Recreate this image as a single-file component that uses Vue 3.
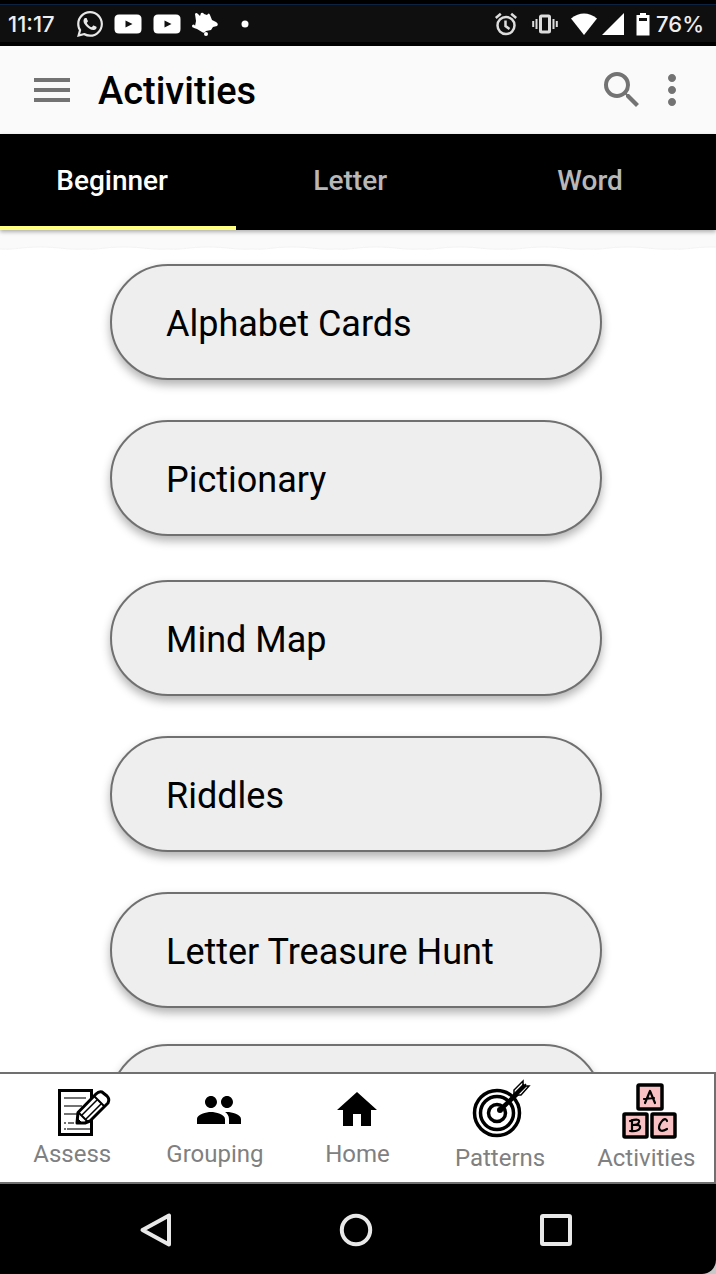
<script setup>
import { ref } from 'vue'

const tabs = ['Beginner', 'Letter', 'Word']
const activeTab = ref('Beginner')
const activities = [
  'Alphabet Cards',
  'Pictionary',
  'Mind Map',
  'Riddles',
  'Letter Treasure Hunt',
]
</script>

<template>
  <div class="phone">
    <div class="status">
      <span class="clock">11:17</span>
      <div class="notices">
        <svg width="26" height="26" viewBox="0 0 24 24" fill="#e8e8e8" aria-hidden="true">
          <path d="M17.47 14.38c-.3-.15-1.76-.87-2.03-.97-.27-.1-.47-.15-.67.15-.2.3-.77.97-.94 1.16-.17.2-.35.22-.64.08-.3-.15-1.26-.46-2.39-1.48-.88-.79-1.48-1.76-1.65-2.06-.17-.3-.02-.46.13-.6.13-.14.3-.35.44-.53.15-.17.2-.3.3-.5.1-.2.05-.37-.03-.52-.07-.15-.67-1.61-.91-2.21-.24-.58-.49-.5-.67-.51h-.57c-.2 0-.52.07-.79.37-.27.3-1.04 1.02-1.04 2.48 0 1.46 1.06 2.88 1.21 3.07.15.2 2.1 3.2 5.08 4.49.71.3 1.26.49 1.69.62.71.23 1.36.2 1.87.12.57-.09 1.76-.72 2.01-1.41.25-.7.25-1.29.17-1.42-.07-.12-.27-.2-.57-.33zM12.05 21.8a9.9 9.9 0 0 1-5.03-1.38l-.36-.21-3.74.98 1-3.65-.24-.37A9.86 9.86 0 0 1 2.17 11.9c0-5.45 4.43-9.88 9.88-9.88s9.89 4.43 9.89 9.88-4.44 9.9-9.89 9.9zM12.05 0C5.5 0 .16 5.33.16 11.9c0 2.1.55 4.14 1.59 5.95L.06 24l6.3-1.65a11.9 11.9 0 0 0 5.69 1.45c6.55 0 11.89-5.34 11.89-11.9S18.6 0 12.05 0z" />
        </svg>
        <svg v-for="n in 2" :key="n" width="28" height="20" viewBox="0 0 28 20" aria-hidden="true">
          <path fill="#fff" d="M5 .5h18q4.500 0 4.500 4.500v10q0 4.500-4.500 4.500H5Q.5 19.500.5 15V5Q.5.5 5 .5z" />
          <path fill="#111" d="M11.500 6.500v7l7-3.500z" />
        </svg>
        <svg width="26" height="24" viewBox="0 0 26 24" fill="#fff" aria-hidden="true">
          <path d="M3 2q1-2 3 0l2 2 1-3q2-1 3 1l3 1q2-3 3 0l2 5 4 2q3 2 1 4l-4 1-2 3-5 1q-2 3-4 1l-5-3-3-1q-2-2 1-2l1-5z" />
          <circle cx="1.500" cy="14" r="1.500" />
          <circle cx="14" cy="22" r="2" />
        </svg>
        <svg width="8" height="8" viewBox="0 0 8 8" fill="#fff" aria-hidden="true"><circle cx="4" cy="4" r="3.500" /></svg>
      </div>
      <div class="signals">
        <svg class="alarm" width="24" height="24" viewBox="0 0 24 24" fill="none" stroke="#ddd" stroke-width="2.500" aria-hidden="true">
          <circle cx="12" cy="13.500" r="8.500" />
          <path d="M11.500 8.500v5.500l4 3M1.800 6l5-4.200M22.200 6l-5-4.200" />
        </svg>
        <svg class="vibrate" width="26" height="20" viewBox="0 0 26 20" fill="none" stroke="#ddd" stroke-width="2" aria-hidden="true">
          <rect x="8.500" y="2" width="9" height="16" rx="1" stroke-width="3" />
          <path d="M4.500 5v10M1.200 7v6M21.500 5v10M24.800 7v6" />
        </svg>
        <svg width="28" height="22" viewBox="0 0 28 22" fill="#fff" aria-hidden="true"><path d="M1 5.500Q14-4.500 27 5.500L14 22z" /></svg>
        <svg width="22" height="22" viewBox="0 0 22 22" fill="#fff" aria-hidden="true"><path d="M22 0v22H0z" /></svg>
        <svg class="battery" width="14" height="24" viewBox="0 0 14 24" aria-hidden="true">
          <path fill="#fff" d="M4 1h6v2h3.500v20.500H.5V3H4z" />
          <path fill="#111" d="M3 6h8v3H3z" />
        </svg>
        <span>76%</span>
      </div>
    </div>

    <header class="appbar">
      <button class="icon-button" type="button" aria-label="Menu">
        <svg width="48" height="48" viewBox="0 0 24 24" fill="#737373"><path d="M3 18h18v-2H3v2zm0-5h18v-2H3v2zm0-7v2h18V6H3z" /></svg>
      </button>
      <h1>Activities</h1>
      <button class="icon-button" type="button" aria-label="Search">
        <svg width="48" height="48" viewBox="0 0 24 24" fill="#737373"><path d="M15.500 14h-.79l-.28-.27A6.471 6.471 0 0 0 16 9.500 6.500 6.500 0 1 0 9.500 16c1.610 0 3.090-.59 4.230-1.570l.27.28v.79l5 4.990L20.490 19l-4.990-5zm-6 0C7.010 14 5 11.990 5 9.500S7.010 5 9.500 5 14 7.010 14 9.500 11.990 14 9.500 14z" /></svg>
      </button>
      <button class="icon-button" type="button" aria-label="More options">
        <svg width="48" height="48" viewBox="0 0 24 24" fill="#737373"><path d="M12 8c1.100 0 2-.9 2-2s-.9-2-2-2-2 .9-2 2 .9 2 2 2zm0 2c-1.100 0-2 .9-2 2s.9 2 2 2 2-.9 2-2-.9-2-2-2zm0 6c-1.100 0-2 .9-2 2s.9 2 2 2 2-.9 2-2-.9-2-2-2z" /></svg>
      </button>
    </header>

    <div class="tabs" role="tablist">
      <button
        v-for="tab in tabs"
        :key="tab"
        type="button"
        role="tab"
        class="tab"
        :class="{ active: tab === activeTab }"
        :aria-selected="tab === activeTab"
        @click="activeTab = tab"
      >{{ tab }}</button>
    </div>

    <main class="content">
      <svg class="wave" width="100%" height="20" aria-hidden="true">
        <defs>
          <pattern id="ripple" width="84" height="20" patternUnits="userSpaceOnUse">
            <path d="M0 0H84V19C66 20 60 17 40 17S16 20 0 19z" fill="#fafafa" />
            <path d="M84 19C66 20 60 17 40 17S16 20 0 19" fill="none" stroke="#f3f3f3" />
          </pattern>
        </defs>
        <rect width="100%" height="20" fill="url(#ripple)" />
      </svg>
      <div class="list">
        <button v-for="name in activities" :key="name" type="button" class="pill">{{ name }}</button>
        <button type="button" class="pill" aria-label="Next activity"></button>
      </div>
    </main>

    <nav class="bottom">
      <a href="#assess">
        <svg width="80" height="52" viewBox="0 0 80 52" fill="none" stroke="#000" aria-hidden="true">
          <path d="M27.500 2.500h32v44h-32z" stroke-width="3" />
          <path d="M32 10h22M32 18h18M32 26h14M32 35h2M36 35h6M44 35h6M32 41h2M35 41h23" stroke="#444" stroke-width="1.500" />
          <path d="M46 24.500 64 6q3-3 6-2l5 4q3 3 1 7L58 33l-5 2h-8z" fill="#fff" stroke-width="3" stroke-linejoin="round" />
          <path d="M46 24l10 10M62 8l11 11" stroke-width="2" />
          <path d="M50 27l15-15M54 31l15-15" stroke-width="1.500" />
          <path d="M45 35v-5l5 5z" fill="#000" />
        </svg>
        <span>Assess</span>
      </a>
      <a href="#grouping">
        <svg width="80" height="52" viewBox="0 0 80 52" aria-hidden="true">
          <g transform="translate(20 -2) scale(2)"><path d="M16 11c1.660 0 2.990-1.340 2.990-3S17.660 5 16 5c-1.660 0-3 1.340-3 3s1.340 3 3 3zm-8 0c1.660 0 2.990-1.340 2.990-3S9.660 5 8 5C6.340 5 5 6.340 5 8s1.340 3 3 3zm0 2c-2.330 0-7 1.170-7 3.500V19h14v-2.500c0-2.330-4.670-3.500-7-3.500zm8 0c-.29 0-.62.02-.97.05 1.160.84 1.970 1.970 1.970 3.450V19h6v-2.500c0-2.330-4.670-3.500-7-3.500z" /></g>
        </svg>
        <span>Grouping</span>
      </a>
      <a href="#home">
        <svg width="80" height="52" viewBox="0 0 80 52" aria-hidden="true">
          <g transform="translate(16 -2) scale(2)"><path d="M10 20v-6h4v6h5v-8h3L12 3 2 12h3v8z" /></g>
        </svg>
        <span>Home</span>
      </a>
      <a href="#patterns">
        <svg width="80" height="60" viewBox="0 0 80 60" fill="none" stroke="#000" aria-hidden="true">
          <circle cx="37" cy="29" r="22.500" stroke-width="3.500" />
          <circle cx="37" cy="29" r="16.500" stroke-width="3.500" />
          <circle cx="37" cy="29" r="8.500" stroke-width="3.500" />
          <circle cx="40" cy="26" r="3" fill="#000" stroke="none" />
          <path d="M40 26 60 7" stroke-width="4.500" />
          <path d="M54 12V6l9-9v5h6l-8 9h-7M57 9l9-9" fill="#fff" stroke-width="1.500" />
          <path d="M54 12 65 1" stroke-width="4.500" />
        </svg>
        <span>Patterns</span>
      </a>
      <a href="#activities" aria-current="page">
        <svg width="80" height="60" viewBox="0 0 80 60" fill="#f8c2c4" stroke="#000" stroke-width="3.500" aria-hidden="true">
          <rect x="32" y="1" width="24" height="24" rx="1" />
          <rect x="18" y="30" width="23" height="23" rx="1" />
          <rect x="46" y="30" width="23" height="23" rx="1" />
          <g fill="none" stroke-width="2.200" stroke-linecap="round" stroke-linejoin="round">
            <path d="M39 19 44 7l5 12M38 15l10-1" />
            <path d="M26 36v11M24 37q10-3 9 1-1 3-6 3 8-1 7 3-2 4-10 3" />
            <path d="M61 37q-1-3-4-1-4 4-4 8 1 5 8 1" />
          </g>
        </svg>
        <span>Activities</span>
      </a>
    </nav>

    <div class="system">
      <button type="button" aria-label="Back">
        <svg width="40" height="40" viewBox="0 0 40 40"><path d="M33 5.500v29L6.500 20z" /></svg>
      </button>
      <button type="button" aria-label="Home screen">
        <svg width="40" height="40" viewBox="0 0 40 40"><circle cx="20" cy="20" r="14.200" /></svg>
      </button>
      <button type="button" aria-label="Recent apps">
        <svg width="40" height="40" viewBox="0 0 40 40"><rect x="6" y="6" width="28" height="28" rx="1" /></svg>
      </button>
    </div>
  </div>
</template>

<style>
body {
  margin: 0;
  background: #c8c8c8;
}
</style>

<style scoped>
.phone {
  display: flex;
  flex-direction: column;
  height: 100vh;
  overflow: hidden;
  border-bottom-right-radius: 14px;
  background: #fff;
  color: #000;
  font-family: Roboto, "Liberation Sans", sans-serif;
}

button {
  margin: 0;
  padding: 0;
  border: 0;
  background: none;
  color: inherit;
  font: inherit;
  cursor: pointer;
}

svg {
  display: block;
  flex: none;
  overflow: visible;
}

.status {
  display: flex;
  align-items: center;
  flex: none;
  box-sizing: border-box;
  height: 46px;
  padding: 2px 12px 0 8px;
  border-top: 4px solid #000;
  border-bottom: 4px solid #000;
  background: #0f0f0f;
  box-shadow: inset 0 1px #0c2440;
  color: #eee;
  font: 500 22px/32px Inter, "Noto Sans", sans-serif;
}

.clock {
  width: 69px;
}

.notices,
.signals {
  display: flex;
  align-items: center;
}

.notices {
  gap: 11px;
}

.notices svg:last-child {
  margin-left: 12px;
}

.signals {
  gap: 4px;
  margin-left: auto;
}

.alarm {
  margin-right: 10px;
}

.vibrate {
  margin-right: 8px;
}

.battery {
  margin: 0 2px 0 8px;
}

.appbar {
  display: flex;
  align-items: center;
  flex: none;
  height: 88px;
  gap: 2px;
  padding: 0 20px 0 28px;
  background: #fafafa;
}

h1 {
  flex: 1;
  margin: 0 0 0 20px;
  font-size: 38px;
  font-weight: 500;
  line-height: 50px;
  padding-top: 2px;
}

.tabs {
  position: relative;
  display: grid;
  grid-template-columns: 33% 1fr 1fr;
  flex: none;
  height: 96px;
  background: #000;
  box-shadow: 0 2px 4px rgba(0, 0, 0, 0.3);
}

.tab {
  padding: 0 12px 0 0;
  border-bottom: 4px solid transparent;
  color: #b8b8b8;
  font-size: 28px;
  font-weight: 500;
}

.tab.active {
  border-bottom-color: #ffff80;
  color: #fff;
}

.content {
  flex: 1;
  min-height: 0;
  overflow: hidden;
}

.list {
  display: grid;
  grid-template-rows: 156px 160px 156px 156px 152px 116px;
  align-items: start;
  padding: 14px 114px 40px 110px;
}

.pill {
  height: 116px;
  padding: 4px 54px 0;
  border: 2px solid #707070;
  border-radius: 58px;
  background: #eee;
  box-shadow: 0 5px 10px rgba(0, 0, 0, 0.3);
  font-size: 36px;
  line-height: 44px;
  text-align: left;
}

.bottom {
  display: grid;
  grid-template-columns: repeat(4, 20%) 21%;
  flex: none;
  box-sizing: border-box;
  height: 112px;
  padding-left: 1px;
  border: 2px solid #707070;
  border-left: 0;
  background: #fff;
}

.bottom a {
  display: flex;
  flex-direction: column;
  align-items: center;
  justify-content: center;
  color: #808080;
  font-size: 24px;
  line-height: 28px;
  text-decoration: none;
}

.system {
  display: grid;
  grid-template-columns: repeat(3, 1fr);
  align-items: center;
  justify-items: center;
  flex: none;
  box-sizing: border-box;
  height: 90px;
  padding: 2px 60px 0 56px;
  background: #000;
}

.system svg {
  fill: none;
  stroke: #e8e8e8;
  stroke-width: 4;
  stroke-linejoin: round;
}
</style>
